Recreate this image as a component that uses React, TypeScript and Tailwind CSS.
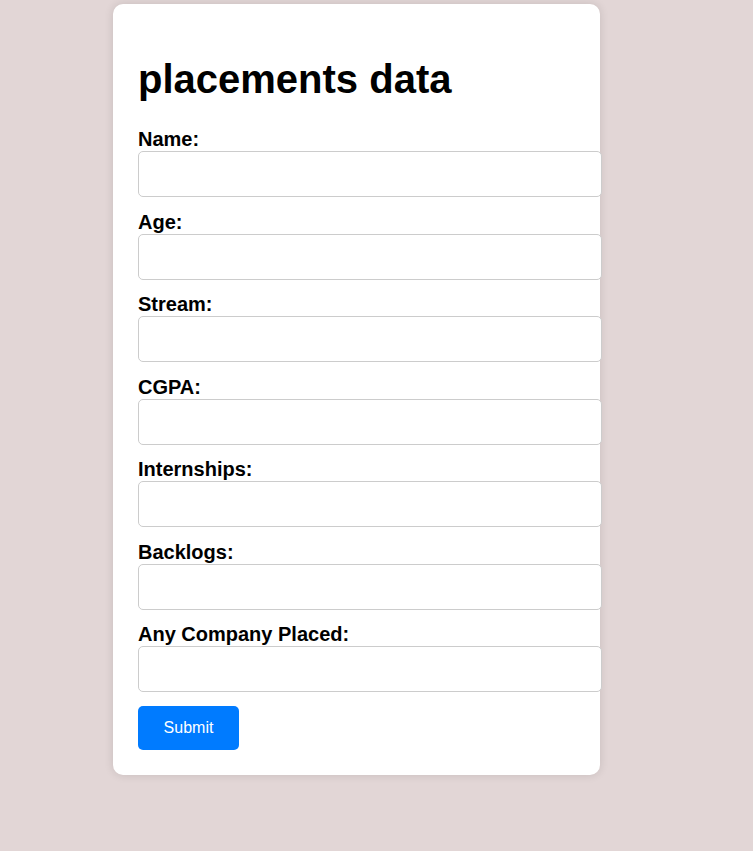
import React from 'react';

const fields = ['Name:', 'Age:', 'Stream:', 'CGPA:', 'Internships:', 'Backlogs:', 'Any Company Placed:'];

export default function App() {
  return (
    <div className="min-h-[851px] w-full bg-[#e2d6d6] pt-[4px] pl-[113px] font-['Liberation_Sans',Arial,sans-serif] text-black">
      <div className="w-[487px] rounded-[10px] bg-white px-[25px] pt-[25px] pb-[25.5px] shadow-[0_0_10px_rgba(0,0,0,0.12)]">
        {/* Title */}
        <h1 className="mt-[26.8px] mb-[26.3px] text-[40px] font-bold leading-[46px]">placements data</h1>

        {/* Fields */}
        <form className="flex flex-col" onSubmit={(e) => e.preventDefault()}>
          {fields.map((label, i) => (
            <div key={i} className="flex flex-col">
              <label className="block text-[20px] font-bold leading-[23px]">{label}</label>
              <input
                type="text"
                className="mb-[13.5px] h-[46px] w-[464px] rounded-[5px] border border-[#cccccc] bg-white px-3 text-base outline-none"
              />
            </div>
          ))}
          <div>
            <button
              type="submit"
              className="h-[44px] w-[101px] rounded-[5px] bg-[#007bff] text-base text-white"
            >
              Submit
            </button>
          </div>
        </form>
      </div>
    </div>
  );
}
